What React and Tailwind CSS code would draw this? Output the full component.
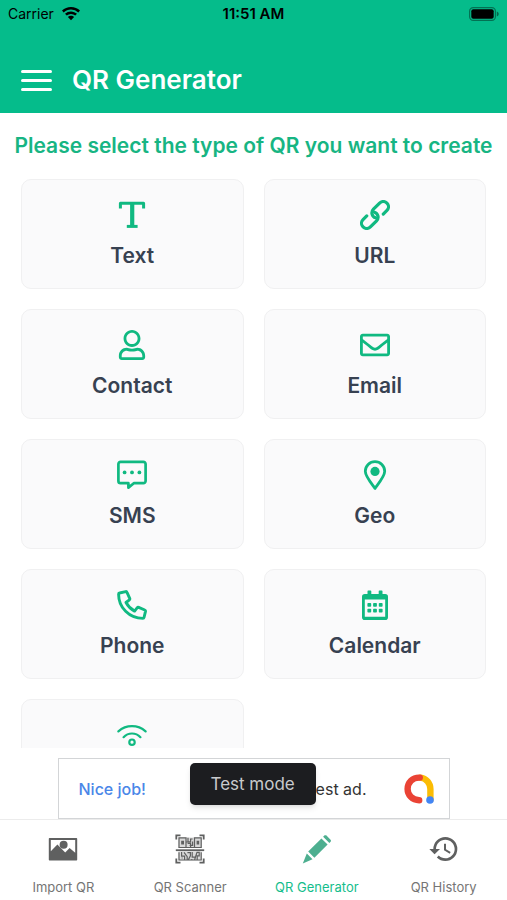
import { FaRegEnvelope, FaRegUser } from 'react-icons/fa';
import { MdHistory } from 'react-icons/md';
import clsx from 'clsx';

function TextIcon() {
  return (
    <svg viewBox="0 0 30 30" className="size-[30px]" fill="none" stroke="currentColor" strokeWidth="3.4" strokeLinejoin="round">
      <path d="M3.4 8.4V3.2h23.200v5.200" strokeWidth="3" />
      <path d="M15.200 3.200v23" strokeWidth="4.200" />
      <path d="M9.800 26.400h10.800" strokeWidth="3" />
    </svg>
  );
}

function UrlIcon() {
  return (
    <svg viewBox="0 0 30 30" className="size-[30px]" fill="none" stroke="currentColor" strokeWidth="3.2" strokeLinecap="round">
      <g transform="translate(15 15) rotate(-45)">
        <path d="M6.500 5.200h5.200a5.200 5.200 0 0 0 0-10.400H3A5.200 5.200 0 0 0-1.600 2.400" />
        <path d="M-6.500-5.200h-5.200a5.200 5.200 0 0 0 0 10.400H-3A5.200 5.200 0 0 0 1.600-2.400" />
      </g>
    </svg>
  );
}

function SmsIcon() {
  return (
    <svg viewBox="0 0 30 30" className="size-[30px]" fill="none" stroke="currentColor" strokeWidth="2.7" strokeLinejoin="round">
      <path d="M3.6 1.8h22.8a2.2 2.2 0 0 1 2.2 2.200v17a2.2 2.2 0 0 1-2.2 2.200H16.800L11.400 27.600v-4.400H3.600A2.2 2.2 0 0 1 1.400 21V4a2.2 2.2 0 0 1 2.2-2.2z" />
      <g fill="currentColor" stroke="none">
        <circle cx="7.6" cy="12.4" r="1.9" />
        <circle cx="15" cy="12.4" r="1.9" />
        <circle cx="22.4" cy="12.4" r="1.9" />
      </g>
    </svg>
  );
}

function GeoIcon() {
  return (
    <svg viewBox="0 0 30 30" className="size-[30px]" fill="none" stroke="currentColor" strokeWidth="2.8" strokeLinejoin="round">
      <path d="M15 28.4C13 25.4 5.3 16.6 5.3 11.3a9.7 9.7 0 0 1 19.4 0c0 5.3-7.7 14.1-9.7 17.1z" />
      <circle cx="15" cy="11.4" r="4.6" fill="currentColor" stroke="none" />
    </svg>
  );
}

function PhoneIcon() {
  return (
    <svg viewBox="0 0 30 30" className="size-[30px]" fill="none" stroke="currentColor" strokeWidth="2.9" strokeLinejoin="round">
      <path d="M2.6 3 8.7 1.6c.6-.1 1.1.2 1.3.7l2.7 6.1c.2.5.1 1.1-.3 1.4L9 12.5a21 21 0 0 0 8.6 8.6l2.7-3.4c.3-.4.9-.5 1.4-.3l6.1 2.6c.5.2.8.8.7 1.3L27 27.5c-.1.5-.6.9-1.1.9C12.3 28.4 1.6 17.6 1.6 4.2c0-.6.4-1.1 1-1.2z" />
    </svg>
  );
}

function CalendarIcon() {
  return (
    <svg viewBox="0 0 30 30" className="size-[30px]" fill="currentColor">
      <path
        fillRule="evenodd"
        d="M7.5 4V1.2q0-.8.8-.8h2.2q.8 0 .8.8V4h7.4V1.2q0-.8.8-.8h2.2q.8 0 .8.8V4h2.7A2.8 2.8 0 0 1 28 6.800v20.400A2.800 2.800 0 0 1 25.200 30H4.800A2.800 2.800 0 0 1 2 27.200V6.800A2.800 2.800 0 0 1 4.800 4zM4.800 9.600v17.200h20.400V9.600z"
      />
      {[7.4, 13.1, 18.8].map((x) => (
        <g key={x}>
          <rect x={x} y="13" width="3.800" height="3.800" rx=".8" />
          <rect x={x} y="18.800" width="3.800" height="3.800" rx=".8" />
        </g>
      ))}
    </svg>
  );
}

function WifiIcon() {
  return (
    <svg viewBox="0 0 30 30" className="size-[30px]" fill="none" stroke="currentColor" strokeWidth="2.200" strokeLinecap="round">
      <path d="M1.400 11.400Q7.200 6.200 15 6.200t13.600 5.200M6.600 17.200Q10 13.500 15 13.500t8.400 3.700" />
      <circle cx="15" cy="22.200" r="2.700" />
    </svg>
  );
}

function SignalIcon() {
  return (
    <svg viewBox="0 0 18 14" className="h-[14px] w-[18px]" fill="black">
      <path d="M9 0c3.500 0 6.700 1.300 9 3.600l-1.700 1.800A10.400 10.400 0 0 0 9 2.500c-2.800 0-5.400 1.100-7.300 2.900L0 3.600A13 13 0 0 1 9 0z" />
      <path d="M9 4.400c2.300 0 4.400.9 6 2.400l-1.800 1.700A6 6 0 0 0 9 6.900a6 6 0 0 0-4.200 1.600L3 6.800a8.700 8.700 0 0 1 6-2.400z" />
      <path d="M9 8.700c1.200 0 2.300.5 3.100 1.200L9 13.200 5.900 9.900A4.400 4.400 0 0 1 9 8.700z" />
    </svg>
  );
}

function BatteryIcon() {
  return (
    <svg viewBox="0 0 30 14" className="h-[14px] w-[30px]">
      <rect x=".6" y=".6" width="25.800" height="12.800" rx="3.600" fill="none" stroke="black" strokeOpacity=".4" strokeWidth="1.200" />
      <rect x="2.300" y="2.300" width="22.400" height="9.400" rx="2" fill="black" />
      <path d="M27.800 4.600c1.400.5 1.900 1.400 1.900 2.400s-.5 1.900-1.900 2.400z" fill="black" fillOpacity=".45" />
    </svg>
  );
}

function ImageIcon() {
  return (
    <svg viewBox="0 0 30 30" className="size-[30px]" fill="#5f6060">
      <path
        fillRule="evenodd"
        d="M1.800 4h26.400c.6 0 1 .4 1 1v20.600c0 .6-.4 1-1 1H1.800c-.6 0-1-.4-1-1V5c0-.6.4-1 1-1zM2.800 6v11.200l6.600-6.800 7.800 8.200 4.400-4.600 5.600 4.800V6z"
      />
      <circle cx="15.600" cy="10.800" r="4" />
    </svg>
  );
}

function ScannerIcon() {
  return (
    <svg viewBox="0 0 30 30" className="size-[30px]" fill="none" stroke="#5f6060" strokeWidth="1.200">
      <path d="M3.500 3.500h23v10.500h-23zM3.500 17.500h23v9h-23z" fill="#d9d9d9" stroke="none" />
      <path d="M1.300 5.500V1.300h4.200M24.500 1.300h4.200v4.200M1.300 24.500v4.200h4.200M24.500 28.700h4.200v-4.200" strokeWidth="1.800" />
      <path d="M.8 16.200h28.400" strokeWidth="1.800" />
      <path d="M4 3.800h7v9.700H4zM19.500 3.800h6.700v9.700h-6.700z" />
      <path d="M6.800 7.400h1.600v2.400H6.800zM22.200 7.400h1.400v2.400h-1.400z" fill="#5f6060" />
      <path d="M11 13.500h8.500M13 3.800v4h2.600V5h2M12.600 9.400h3v4.100M17.600 7.400v4h-3M11 8h2" />
      <path d="M4 18.200v7.800h22.200v-7.800M6.600 18v4.200h3v3.600M9 18.400l3.200 4.200v3.200M12.400 18.600h3v3.200l-2 3.800M17.200 18v5.200h3.400M19.600 25.800l2.400-7.400h2.200v3.400h-2v4M6.600 24h1M16.800 25v1" />
    </svg>
  );
}

function PencilIcon() {
  return (
    <svg viewBox="0 0 30 30" className="size-[30px]" fill="#4daf90">
      <path d="M22.600 1.300a2 2 0 0 1 1.600 0l4.600 4.600a2 2 0 0 1 0 1.700l-1.400 1.500-6.300-6.300zM19.400 4.400l6.200 6.200L12.400 23.800l-6.200-6.200zM4.800 19.600l5.700 5.700L.8 29.400z" />
    </svg>
  );
}

function AdLogo() {
  return (
    <svg viewBox="0 0 30 30" className="size-[30px]" fill="none" strokeWidth="6.400" strokeLinecap="round">
      <path d="M16.400 3.600c5.800.6 10 5.400 10 11.400v10.400" stroke="#fbbc04" />
      <path d="M15.800 3.600C8.500 3.200 3.600 8.800 3.600 15c0 6 4.600 11.200 11.600 11.200" stroke="#ea4335" />
      <circle cx="26" cy="26" r="3.800" fill="#4285f4" />
    </svg>
  );
}

const QR_TYPES = [
  { label: 'Text', icon: <TextIcon /> },
  { label: 'URL', icon: <UrlIcon /> },
  { label: 'Contact', icon: <FaRegUser className="size-[30px]" /> },
  { label: 'Email', icon: <FaRegEnvelope className="size-[30px]" /> },
  { label: 'SMS', icon: <SmsIcon /> },
  { label: 'Geo', icon: <GeoIcon /> },
  { label: 'Phone', icon: <PhoneIcon /> },
  { label: 'Calendar', icon: <CalendarIcon /> },
  { label: 'WiFi', icon: <WifiIcon /> },
];

const TABS = [
  { label: 'Import QR', icon: <ImageIcon /> },
  { label: 'QR Scanner', icon: <ScannerIcon /> },
  { label: 'QR Generator', icon: <PencilIcon />, active: true },
  { label: 'QR History', icon: <MdHistory className="size-8 text-[#5f6060]" /> },
];

export default function App() {
  return (
    <div className="flex h-screen flex-col overflow-hidden bg-white font-['Inter',sans-serif]">
      <header className="shrink-0 bg-[#05bc8b]">
        {/* Status bar */}
        <div className="grid h-7 grid-cols-3 items-center px-2 text-sm text-black">
          <div className="flex items-center gap-2">
            <span>Carrier</span>
            <SignalIcon />
          </div>
          <span className="text-center text-[15px] font-semibold">11:51 AM</span>
          <span className="justify-self-end">
            <BatteryIcon />
          </span>
        </div>
        <div className="flex items-center gap-5 px-[21px] pt-[34px] pb-[15px]">
          <button type="button" aria-label="Open menu" className="flex w-[31px] flex-col gap-[6px]">
            <span className="h-[3px] rounded-full bg-white" />
            <span className="h-[3px] rounded-full bg-white" />
            <span className="h-[3px] rounded-full bg-white" />
          </button>
          <h1 className="text-[26px] leading-9 font-semibold text-white">QR Generator</h1>
        </div>
      </header>

      <main className="min-h-0 flex-1 overflow-hidden">
        <h2 className="py-5 text-center text-[21px] leading-[26px] font-semibold whitespace-nowrap text-[#17b583]">
          Please select the type of QR you want to create
        </h2>
        <div className="grid grid-cols-2 gap-5 px-[21px]">
          {QR_TYPES.map(({ label, icon }) => (
            <button
              key={label}
              type="button"
              className="flex h-[110px] flex-col items-center gap-[10px] rounded-[10px] border border-[#f0f0f1] bg-[#fafafb] pt-5 text-[21px] leading-8 font-semibold text-[#374151]"
            >
              <span className="text-[#10b981]">{icon}</span>
              {label}
            </button>
          ))}
        </div>
      </main>

      {/* Ad banner */}
      <div className="flex shrink-0 justify-center pt-[10px]">
        <div className="relative flex h-[61px] w-[392px] items-center justify-between border border-[#d3d5d7] pr-[15px] pl-5 text-base">
          <span className="font-medium text-[#4a86e8]">Nice job!</span>
          <div className="flex items-center gap-[37px]">
            <span className="text-[#333]">This is a test ad.</span>
            <AdLogo />
          </div>
          <div className="absolute top-1 left-[131px] rounded-[5px] bg-[#1c1d20] px-[21px] py-2 text-[17px] leading-[26px] text-[#c9cacc] shadow-md">
            Test mode
          </div>
        </div>
      </div>

      <nav className="grid h-[81px] shrink-0 grid-cols-4 border-t border-[#ececec]">
        {TABS.map(({ label, icon, active }) => (
          <a
            key={label}
            href="#"
            aria-current={active ? 'page' : undefined}
            className={clsx(
              'flex flex-col items-center gap-[13px] pt-[14px] text-[13px] leading-5',
              active ? 'text-[#14bd8c]' : 'text-[#757575]'
            )}
          >
            <span className="flex h-[30px] items-center">{icon}</span>
            {label}
          </a>
        ))}
      </nav>
    </div>
  );
}
